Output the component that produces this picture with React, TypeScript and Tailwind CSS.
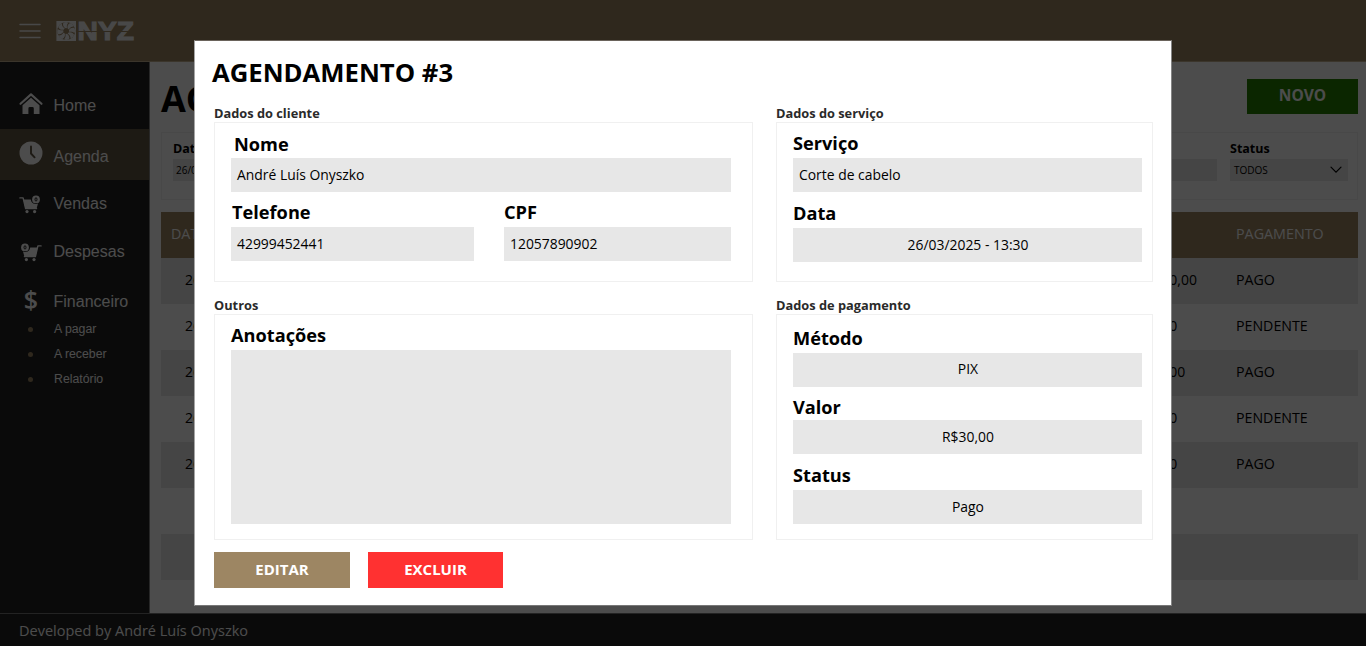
import type { ReactNode } from "react";

const sans = "font-['Open_Sans','Noto_Sans',sans-serif]";
const arial = "font-['Liberation_Sans',Arial,sans-serif]";

function HomeIcon() {
  return (
    <svg width="24" height="22" viewBox="0 0 24 22" fill="none">
      <path d="M1.5 10.800 12 1.400l10.500 9.400" stroke="white" strokeWidth="2.1" strokeLinecap="round" strokeLinejoin="round" />
      <path d="M3.500 12.200 12 4.700l8.500 7.500V21h-5.700v-5.600q0-1.400-1.400-1.400h-2.600q-1.400 0-1.400 1.400V21H3.500z" fill="white" />
    </svg>
  );
}

function ClockIcon() {
  return (
    <svg width="24" height="24" viewBox="0 0 24 24" fill="none">
      <circle cx="12" cy="12" r="11.500" fill="white" />
      <path d="M12 5.500V12.500L15.600 16.300" stroke="#635744" strokeWidth="1.900" strokeLinecap="round" />
    </svg>
  );
}

function CartIcon({ flip = false }: { flip?: boolean }) {
  return (
    <svg width="22" height="19" viewBox="0 0 22 19" fill="none" className={flip ? "-scale-x-100" : "-ml-[3px]"}>
      <path d="M.9 2.900H4.100L6.600 13.600H17.600" stroke="white" strokeWidth="1.400" strokeLinecap="round" strokeLinejoin="round" />
      <path d="M4.400 4.600H11.800Q12.300 8.400 16 9 17.800 9.200 19 8.500L17.600 13.500H6.400z" fill="white" />
      <circle cx="8" cy="16.600" r="1.600" fill="white" />
      <circle cx="15.600" cy="16.600" r="1.600" fill="white" />
      <circle cx="17" cy="4.400" r="3.900" fill="white" />
      <ellipse cx="17" cy="4.400" rx="1" ry="1.700" stroke="#222" strokeWidth="1" />
    </svg>
  );
}

function Logo() {
  return (
    <svg width="84" height="22" viewBox="0 0 84 22" className="overflow-visible">
      <rect x=".4" y="1" width="19.600" height="20" fill="#f2f2f2" />
      <circle cx="10.200" cy="11" r="9" fill="#9d8663" />
      {[0, 45, 90, 135, 180, 225, 270, 315].map((a) => (
        <path key={a} d="M9.400 8.300C7.300 6.900 6.500 4.800 7.300 2.700 9.100 1.800 11.400 1.900 12.300 2.700 10.900 4.200 10.600 6 11 8.200z" fill="#f2f2f2" transform={`rotate(${a} 10.200 11)`} />
      ))}
      <circle cx="10.200" cy="11" r="2.500" fill="#9d8663" />
      <text x="21.500" y="20.400" textLength="56.500" lengthAdjust="spacingAndGlyphs" fill="#f2f2f2" stroke="#f2f2f2" strokeWidth="1" fontSize="26" fontWeight="700" fontFamily="Liberation Sans, Arial, sans-serif">NYZ</text>
      <path d="M21 11.500h57" stroke="#9d8663" strokeWidth="1" />
    </svg>
  );
}

function NavItem({ icon, label, className }: { icon: ReactNode; label: string; className: string }) {
  return (
    <li className={`flex items-center ${className}`}>
      <span className="ml-[19px] flex w-6 shrink-0 justify-center">{icon}</span>
      <span className="ml-[10.5px] text-[16px] leading-5">{label}</span>
    </li>
  );
}

function Sidebar() {
  return (
    <nav className={`w-[150px] shrink-0 border-r border-[#888] bg-[#222] pt-[19px] text-white ${arial}`}>
      <ul>
        <NavItem icon={<span className="-mt-[3px]"><HomeIcon /></span>} label="Home" className="h-12 pt-px" />
        <NavItem icon={<span className="-mt-2"><ClockIcon /></span>} label="Agenda" className="h-[51px] bg-[#635744] pt-1" />
        <NavItem icon={<CartIcon />} label="Vendas" className="h-12" />
        <NavItem icon={<CartIcon flip />} label="Despesas" className="h-12" />
        <NavItem
          icon={<span className={`-mt-[7px] text-[25px] leading-6 font-semibold ${sans}`}>$</span>}
          label="Financeiro"
          className="mt-[10px] h-[30px] pt-0.5"
        />
      </ul>
      <ul className="pt-px">
        {["A pagar", "A receber", "Relatório"].map((t) => (
          <li key={t} className="flex h-[25px] items-center text-[12.300px]">
            <span className="ml-7 size-[5px] rounded-full bg-[#9d8663]" />
            <span className="ml-[21px]">{t}</span>
          </li>
        ))}
      </ul>
    </nav>
  );
}

const rows = [
  ["26/03/2025", "R$1.200,00", "PAGO"],
  ["26/03/2025", "R$30,00", "PENDENTE"],
  ["26/03/2025", "R$300,00", "PAGO"],
  ["26/03/2025", "R$30,00", "PENDENTE"],
  ["26/03/2025", "R$30,00", "PAGO"],
  ["", "", ""],
  ["", "", ""],
];

function Content() {
  return (
    <main className="flex-1 bg-white pl-[11px] pr-2 text-black">
      <div className="flex h-[70px] items-start justify-between pt-[17px]">
        <h1 className="text-[36px] leading-10 font-bold">AGENDA</h1>
        <button className="h-[35px] w-[111px] bg-[#268000] pb-px text-[15.500px] font-bold text-white">NOVO</button>
      </div>
      <div className="flex h-[68px] items-start justify-between border border-[#f0f0f0] pl-[11px] pr-[9px] pt-1.5">
        <div className="w-[118px]">
          <p className="h-5 text-[12.500px] leading-[19px] font-bold">Data</p>
          <div className="flex h-[22px] items-center bg-[#e7e7e7] pl-[3px] text-[10px]">26/03/2025</div>
        </div>
        <div className="flex gap-[13px]">
          <div className="mt-5 h-[22px] w-[118px] bg-[#e7e7e7]" />
          <div className="w-[118px]">
            <p className="h-5 text-[12.500px] leading-[19px] font-bold">Status</p>
            <div className="flex h-[22px] items-center justify-between bg-[#e7e7e7] pl-1 pr-[6px] text-[10px]">
              TODOS
              <svg width="12" height="8" viewBox="0 0 12 8" fill="none">
                <path d="M1 1.200l5 5 5-5" stroke="black" strokeWidth="1.200" strokeLinecap="round" />
              </svg>
            </div>
          </div>
        </div>
      </div>
      <div className="mt-3 text-[14px]">
        <div className="flex h-[46px] items-center bg-[#9d8663] pb-[3px] pl-2.5 text-[14.300px] text-white">
          <span className="w-[954px]">DATA</span>
          <span className="w-[111px]">VALOR</span>
          <span>PAGAMENTO</span>
        </div>
        {rows.map(([date, value, status], i) => (
          <div key={i} className="flex h-[46px] items-center pb-[3px] pl-6 odd:bg-white even:bg-[#e7e7e7]">
            <span className="w-[940px]">{date}</span>
            <span className="w-[111px]">{value}</span>
            <span className="text-[14.200px]">{status}</span>
          </div>
        ))}
      </div>
    </main>
  );
}

function Field({ label, value, className = "", center = false, box = "h-[34px]", labelClass = "leading-6" }: {
  label: string; value: string; className?: string; center?: boolean; box?: string; labelClass?: string;
}) {
  return (
    <div className={className}>
      <p className={`h-[26px] text-[18.200px] font-bold ${labelClass}`}>{label}</p>
      <div className={`flex items-center bg-[#e7e7e7] text-[13.900px] ${box} ${center ? "justify-center pl-px" : "pt-px pl-1.5"}`}>{value}</div>
    </div>
  );
}

function Section({ title, className, children }: { title: string; className: string; children: ReactNode }) {
  return (
    <section>
      <h3 className="h-[18px] text-[12.800px] leading-[18px] font-bold text-[#2a2a2a]">{title}</h3>
      <div className={`border border-[#f0f0f0] ${className}`}>{children}</div>
    </section>
  );
}

function Modal() {
  return (
    <div className="absolute left-[194px] top-10 h-[566px] w-[978px] border border-t-[#6a635b] border-r-[#858585] border-b-[#777] border-l-[#a5a5a5] bg-white pl-[19px] text-black">
      <h2 className="-ml-0.5 h-[63px] pt-[14px] text-[25.700px] leading-9 font-bold">AGENDAMENTO #3</h2>
      <div className="grid grid-cols-[539px_377px] gap-x-[23px]">
        <Section title="Dados do cliente" className="h-[160px] pl-4 pr-[21px] pt-[9px]">
          <Field label="Nome" value="André Luís Onyszko" labelClass="pl-[3px] leading-6" />
          <div className="mt-[9px] flex justify-between">
            <Field label="Telefone" value="42999452441" className="w-[243px]" labelClass="pl-px leading-[22px]" />
            <Field label="CPF" value="12057890902" className="w-[227px]" labelClass="leading-[22px]" />
          </div>
        </Section>
        <Section title="Dados do serviço" className="h-[160px] pl-4 pr-2.5 pt-[9px]">
          <Field label="Serviço" value="Corte de cabelo" labelClass="leading-[22px]" />
          <Field label="Data" value="26/03/2025 - 13:30" center className="mt-2.5" labelClass="leading-[22px]" />
        </Section>
      </div>
      <div className="mt-[14px] grid grid-cols-[539px_377px] gap-x-[23px]">
        <Section title="Outros" className="h-[226px] pl-4 pr-[21px] pt-[9px]">
          <Field label="Anotações" value="" box="h-[174px]" labelClass="leading-[22px]" />
        </Section>
        <Section title="Dados de pagamento" className="h-[226px] pl-4 pr-2.5 pt-3">
          <Field label="Método" value="PIX" center box="h-[34px] pb-0.5" labelClass="leading-[22px]" />
          <Field label="Valor" value="R$30,00" center className="mt-[7px]" labelClass="leading-[26px]" />
          <Field label="Status" value="Pago" center className="mt-2.5" labelClass="leading-[22px]" />
        </Section>
      </div>
      <div className="mt-3 flex gap-[18px] text-[15px] font-bold text-white">
        <button className="h-9 w-[136px] bg-[#9d8663] pb-0.5">EDITAR</button>
        <button className="h-9 w-[135px] bg-[#ff3131] pb-0.5">EXCLUIR</button>
      </div>
    </div>
  );
}

export default function App() {
  return (
    <div className={`relative flex h-[646px] w-[1366px] flex-col overflow-hidden ${sans}`}>
      <header className="flex h-[62px] shrink-0 items-center border-b border-[#c5b28f] bg-[#9d8663] pl-[19px]">
        <svg width="22" height="16" viewBox="0 0 22 16" stroke="#f2f2f2" strokeWidth="1.500" strokeLinecap="round">
          <path d="M1 1.500h20M1 8h20M1 14.500h20" />
        </svg>
        <span className="ml-[15px]"><Logo /></span>
      </header>
      <div className="flex h-[551px] shrink-0">
        <Sidebar />
        <Content />
      </div>
      <footer className="flex h-[33px] items-center border-t border-[#777] bg-[#222] pl-[19px] pt-0.5 text-[14.500px] text-white">
        Developed by André Luís Onyszko
      </footer>
      <div className="absolute inset-0 bg-black/70" />
      <Modal />
    </div>
  );
}
